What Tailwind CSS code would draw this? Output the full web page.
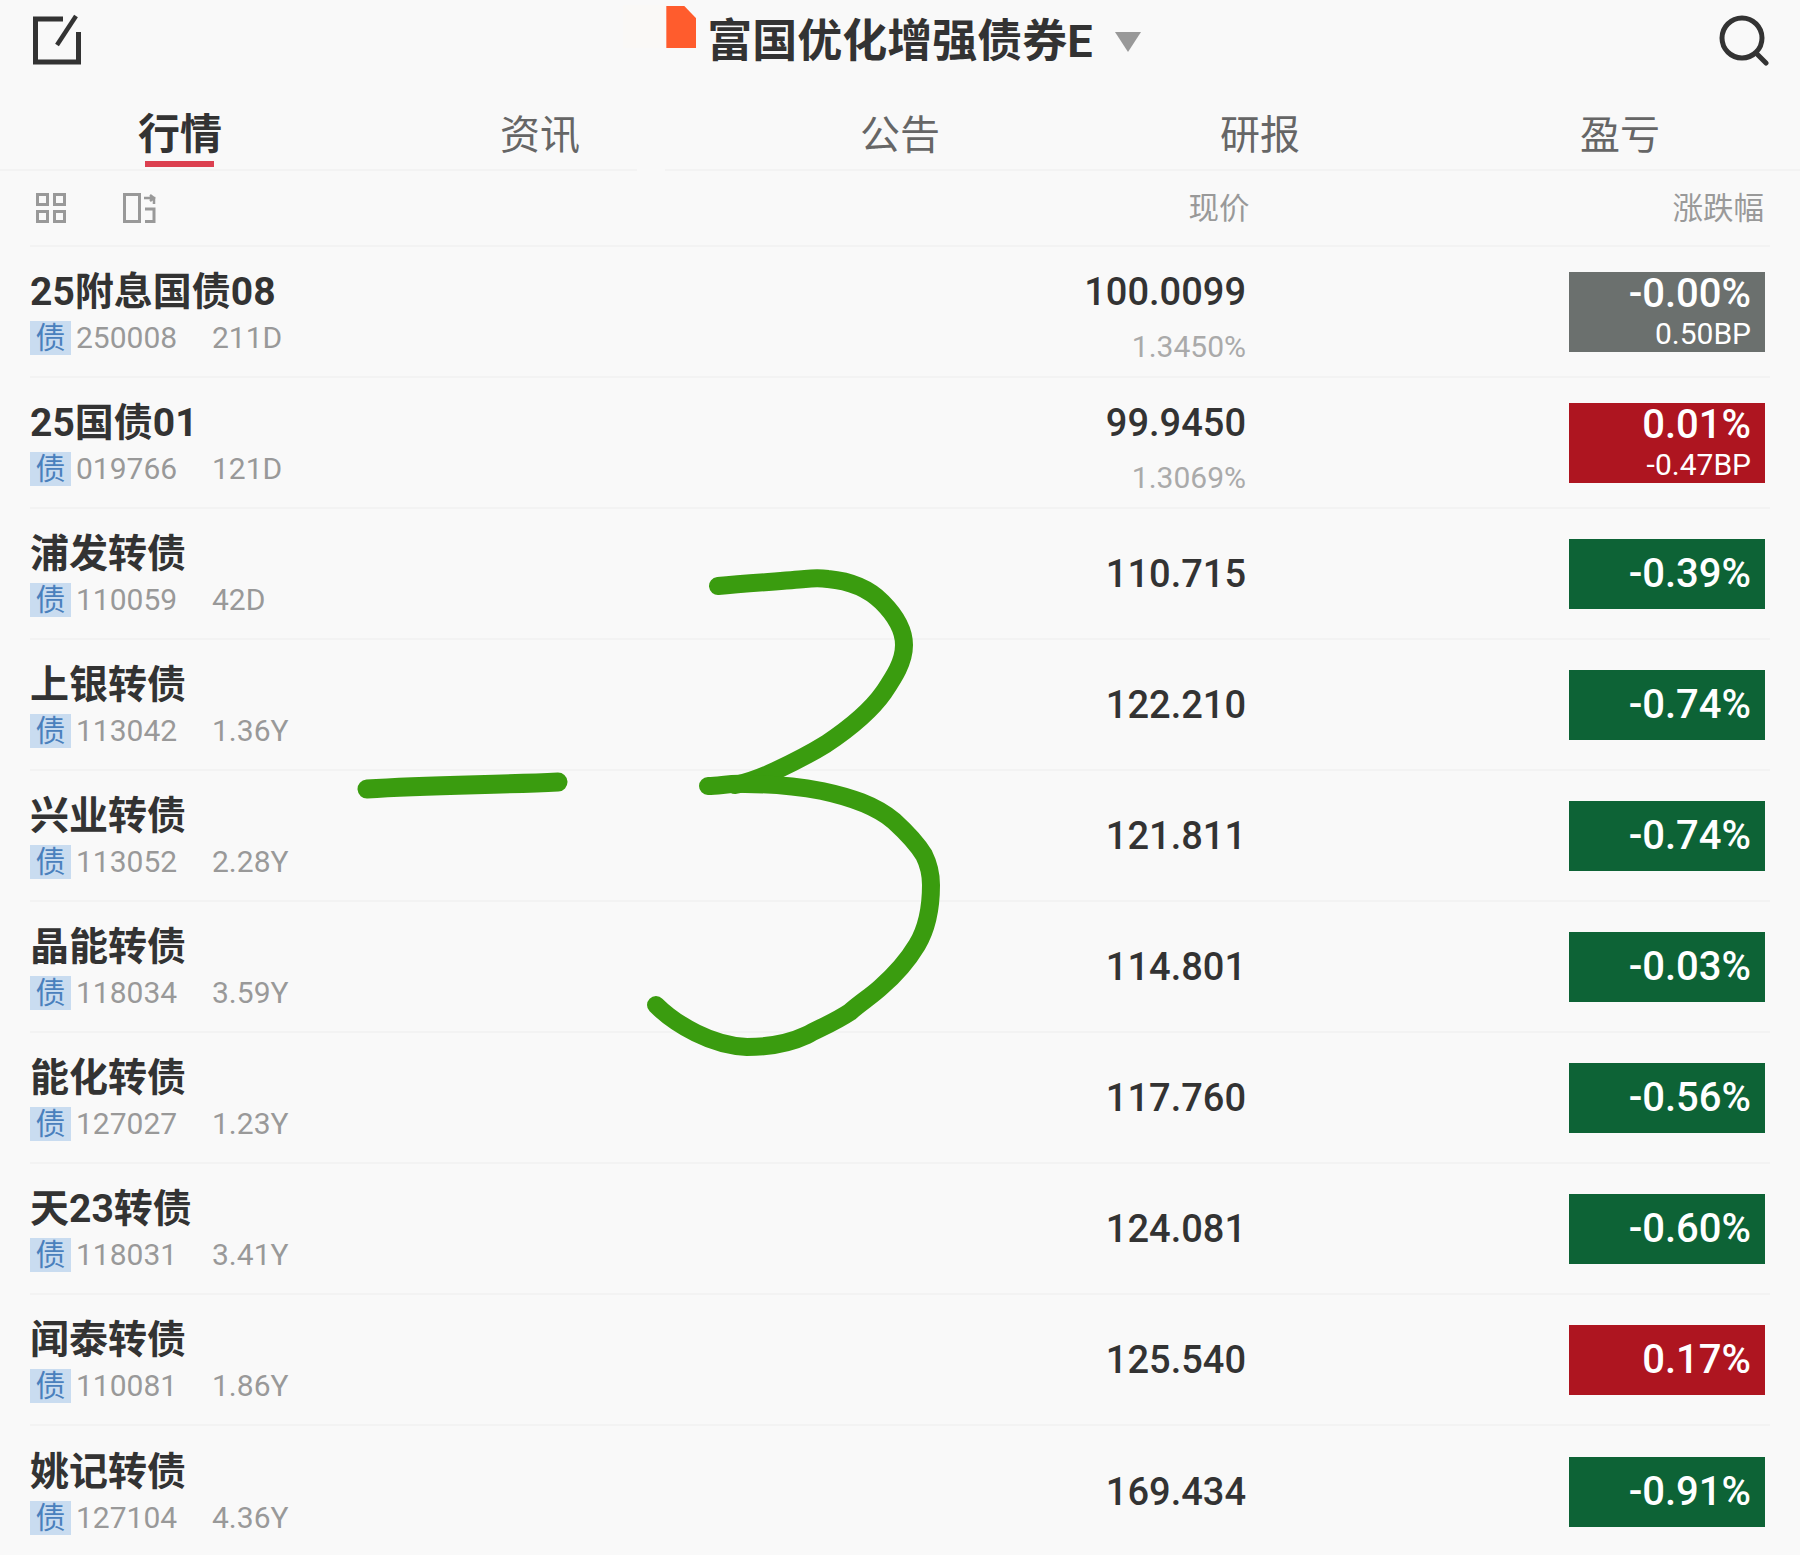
<!DOCTYPE html>
<html lang="zh">
<head>
<meta charset="utf-8">
<script src="https://cdn.jsdelivr.net/npm/@tailwindcss/browser@4"></script>
<title>富国优化增强债券E</title>
</head>
<body class="m-0 bg-[#f9f9f9]">
<div class="relative w-[1800px] h-[1555px] overflow-hidden bg-[#f9f9f9] text-[#333] font-['Roboto','Noto_Sans_CJK_SC',sans-serif]">
  <header class="flex h-[80px] items-center justify-between pl-[30px] pr-[30px]">
    <svg class="w-[52px] h-[52px]" viewBox="0 0 52 52" fill="none" stroke="#333" stroke-width="5"><path d="M33 5H5.500V48H48.500V18"/><path d="M46 2L27 31" stroke-width="4.500"/></svg>
    <div class="flex items-center h-full ml-[7px]">
      <div class="self-start mt-[6px] w-[30px] h-[42px] bg-[#ff5c2d] [clip-path:polygon(0_0,60%_0,100%_30%,100%_100%,0_100%)]"></div>
      <h1 class="ml-[11px] mt-[3px] text-[45px] leading-[80px] font-bold text-[#333]">富国优化增强债券E</h1>
      <svg class="ml-[22px] w-[26px] h-[20px] mt-[4px]" viewBox="0 0 26 20"><path d="M0 0H26L13 20Z" fill="#999"/></svg>
    </div>
    <svg class="w-[52px] h-[52px]" viewBox="0 0 52 52" fill="none" stroke="#333" stroke-width="5" stroke-linecap="round"><circle cx="24" cy="24" r="20"/><path d="M39 40L48 49"/></svg>
  </header>
  <nav class="grid grid-cols-5 h-[91px] border-b-2 border-[#f3f3f3] text-[40px] text-[#666] text-center">
    <div class="relative pt-[27px] leading-[56px] text-[42px] font-bold text-[#333]">行情<span class="absolute left-[145px] top-[81px] w-[69px] h-[6px] bg-[#dc4050]"></span></div>
    <div class="pt-[28px] leading-[56px]">资讯</div>
    <div class="pt-[28px] leading-[56px]">公告</div>
    <div class="pt-[28px] leading-[56px]">研报</div>
    <div class="pt-[28px] leading-[56px]">盈亏</div>
  </nav>
  <main class="pl-[30px] pr-[30px]">
    <div class="flex items-center h-[76px] border-b-2 border-[#f3f3f3] text-[30.5px] text-[#999]">
      <svg class="ml-[6px] w-[30px] h-[30px]" viewBox="0 0 30 30" fill="none" stroke="#999" stroke-width="3"><rect x="1.5" y="1.5" width="10" height="10"/><rect x="18.5" y="1.5" width="10" height="10"/><rect x="1.5" y="18.5" width="10" height="10"/><rect x="18.5" y="18.5" width="10" height="10"/></svg>
      <svg class="ml-[57px] w-[33px] h-[30px]" viewBox="0 0 33 30" fill="none" stroke="#999" stroke-width="3"><rect x="1.5" y="1.5" width="15" height="27"/><path d="M21 5H31V11M27 2L31 5L27 8" stroke-width="2.5"/><path d="M22 16H31V28.500H22" stroke-width="3"/></svg>
      <span class="ml-auto w-[62px] text-right pt-[2px]">现价</span>
      <span class="ml-[423px] mr-[6px] pt-[2px]">涨跌幅</span>
    </div>

    <div class="flex items-center h-[131px] border-b-2 border-[#f3f3f3]">
      <div class="w-[600px]"><div class="text-[39px] leading-[50px] font-bold mt-[-2px]">25附息国债08</div><div class="flex items-center h-[34px] mt-[4px] text-[30px] text-[#999]"><span class="flex justify-center items-center w-[41px] h-[34px] mr-[5px] bg-[#c9dcf0] text-[#4a80bd]">债</span><span class="w-[136px]">250008</span><span>211D</span></div></div>
      <div class="w-[616px] mt-[8px] text-right"><div class="text-[38px] leading-[50px] font-medium">100.0099</div><div class="mt-[12px] text-[30px] leading-[36px] text-[#aaa]">1.3450%</div></div>
      <div class="ml-[323px] flex flex-col justify-center w-[196px] h-[80px] pr-[14px] text-right text-white bg-[#6b706e]"><div class="text-[40px] leading-[44px] font-medium mt-[-5px] mb-[2px]">-0.00%</div><div class="text-[30px] leading-[32px] mb-[-3px]">0.50BP</div></div>
    </div>
    <div class="flex items-center h-[131px] border-b-2 border-[#f3f3f3]">
      <div class="w-[600px]"><div class="text-[39px] leading-[50px] font-bold mt-[-2px]">25国债01</div><div class="flex items-center h-[34px] mt-[4px] text-[30px] text-[#999]"><span class="flex justify-center items-center w-[41px] h-[34px] mr-[5px] bg-[#c9dcf0] text-[#4a80bd]">债</span><span class="w-[136px]">019766</span><span>121D</span></div></div>
      <div class="w-[616px] mt-[8px] text-right"><div class="text-[38px] leading-[50px] font-medium">99.9450</div><div class="mt-[12px] text-[30px] leading-[36px] text-[#aaa]">1.3069%</div></div>
      <div class="ml-[323px] flex flex-col justify-center w-[196px] h-[80px] pr-[14px] text-right text-white bg-[#ae1520]"><div class="text-[40px] leading-[44px] font-medium mt-[-5px] mb-[2px]">0.01%</div><div class="text-[30px] leading-[32px] mb-[-3px]">-0.47BP</div></div>
    </div>
    <div class="flex items-center h-[131px] border-b-2 border-[#f3f3f3]">
      <div class="w-[600px]"><div class="text-[39px] leading-[50px] font-bold mt-[-2px]">浦发转债</div><div class="flex items-center h-[34px] mt-[4px] text-[30px] text-[#999]"><span class="flex justify-center items-center w-[41px] h-[34px] mr-[5px] bg-[#c9dcf0] text-[#4a80bd]">债</span><span class="w-[136px]">110059</span><span>42D</span></div></div>
      <div class="w-[616px] pt-[2px] text-right text-[38px] font-medium">110.715</div>
      <div class="ml-[323px] flex items-center justify-end w-[196px] h-[70px] pr-[14px] text-[40px] font-medium text-white bg-[#0d6336]">-0.39%</div>
    </div>
    <div class="flex items-center h-[131px] border-b-2 border-[#f3f3f3]">
      <div class="w-[600px]"><div class="text-[39px] leading-[50px] font-bold mt-[-2px]">上银转债</div><div class="flex items-center h-[34px] mt-[4px] text-[30px] text-[#999]"><span class="flex justify-center items-center w-[41px] h-[34px] mr-[5px] bg-[#c9dcf0] text-[#4a80bd]">债</span><span class="w-[136px]">113042</span><span>1.36Y</span></div></div>
      <div class="w-[616px] pt-[2px] text-right text-[38px] font-medium">122.210</div>
      <div class="ml-[323px] flex items-center justify-end w-[196px] h-[70px] pr-[14px] text-[40px] font-medium text-white bg-[#0d6336]">-0.74%</div>
    </div>
    <div class="flex items-center h-[131px] border-b-2 border-[#f3f3f3]">
      <div class="w-[600px]"><div class="text-[39px] leading-[50px] font-bold mt-[-2px]">兴业转债</div><div class="flex items-center h-[34px] mt-[4px] text-[30px] text-[#999]"><span class="flex justify-center items-center w-[41px] h-[34px] mr-[5px] bg-[#c9dcf0] text-[#4a80bd]">债</span><span class="w-[136px]">113052</span><span>2.28Y</span></div></div>
      <div class="w-[616px] pt-[2px] text-right text-[38px] font-medium">121.811</div>
      <div class="ml-[323px] flex items-center justify-end w-[196px] h-[70px] pr-[14px] text-[40px] font-medium text-white bg-[#0d6336]">-0.74%</div>
    </div>
    <div class="flex items-center h-[131px] border-b-2 border-[#f3f3f3]">
      <div class="w-[600px]"><div class="text-[39px] leading-[50px] font-bold mt-[-2px]">晶能转债</div><div class="flex items-center h-[34px] mt-[4px] text-[30px] text-[#999]"><span class="flex justify-center items-center w-[41px] h-[34px] mr-[5px] bg-[#c9dcf0] text-[#4a80bd]">债</span><span class="w-[136px]">118034</span><span>3.59Y</span></div></div>
      <div class="w-[616px] pt-[2px] text-right text-[38px] font-medium">114.801</div>
      <div class="ml-[323px] flex items-center justify-end w-[196px] h-[70px] pr-[14px] text-[40px] font-medium text-white bg-[#0d6336]">-0.03%</div>
    </div>
    <div class="flex items-center h-[131px] border-b-2 border-[#f3f3f3]">
      <div class="w-[600px]"><div class="text-[39px] leading-[50px] font-bold mt-[-2px]">能化转债</div><div class="flex items-center h-[34px] mt-[4px] text-[30px] text-[#999]"><span class="flex justify-center items-center w-[41px] h-[34px] mr-[5px] bg-[#c9dcf0] text-[#4a80bd]">债</span><span class="w-[136px]">127027</span><span>1.23Y</span></div></div>
      <div class="w-[616px] pt-[2px] text-right text-[38px] font-medium">117.760</div>
      <div class="ml-[323px] flex items-center justify-end w-[196px] h-[70px] pr-[14px] text-[40px] font-medium text-white bg-[#0d6336]">-0.56%</div>
    </div>
    <div class="flex items-center h-[131px] border-b-2 border-[#f3f3f3]">
      <div class="w-[600px]"><div class="text-[39px] leading-[50px] font-bold mt-[-2px]">天23转债</div><div class="flex items-center h-[34px] mt-[4px] text-[30px] text-[#999]"><span class="flex justify-center items-center w-[41px] h-[34px] mr-[5px] bg-[#c9dcf0] text-[#4a80bd]">债</span><span class="w-[136px]">118031</span><span>3.41Y</span></div></div>
      <div class="w-[616px] pt-[2px] text-right text-[38px] font-medium">124.081</div>
      <div class="ml-[323px] flex items-center justify-end w-[196px] h-[70px] pr-[14px] text-[40px] font-medium text-white bg-[#0d6336]">-0.60%</div>
    </div>
    <div class="flex items-center h-[131px] border-b-2 border-[#f3f3f3]">
      <div class="w-[600px]"><div class="text-[39px] leading-[50px] font-bold mt-[-2px]">闻泰转债</div><div class="flex items-center h-[34px] mt-[4px] text-[30px] text-[#999]"><span class="flex justify-center items-center w-[41px] h-[34px] mr-[5px] bg-[#c9dcf0] text-[#4a80bd]">债</span><span class="w-[136px]">110081</span><span>1.86Y</span></div></div>
      <div class="w-[616px] pt-[2px] text-right text-[38px] font-medium">125.540</div>
      <div class="ml-[323px] flex items-center justify-end w-[196px] h-[70px] pr-[14px] text-[40px] font-medium text-white bg-[#ae1520]">0.17%</div>
    </div>
    <div class="flex items-center h-[131px]">
      <div class="w-[600px]"><div class="text-[39px] leading-[50px] font-bold mt-[-2px]">姚记转债</div><div class="flex items-center h-[34px] mt-[4px] text-[30px] text-[#999]"><span class="flex justify-center items-center w-[41px] h-[34px] mr-[5px] bg-[#c9dcf0] text-[#4a80bd]">债</span><span class="w-[136px]">127104</span><span>4.36Y</span></div></div>
      <div class="w-[616px] pt-[2px] text-right text-[38px] font-medium">169.434</div>
      <div class="ml-[323px] flex items-center justify-end w-[196px] h-[70px] pr-[14px] text-[40px] font-medium text-white bg-[#0d6336]">-0.91%</div>
    </div>
  </main>
  <div class="absolute left-[637px] top-[168px] w-[28px] h-[4px] bg-[#f9f9f9]"></div>
  <div class="absolute left-[623px] top-[5px] w-[43px] h-[43px] bg-[#faf9f7]"></div>
  <svg class="absolute left-0 top-0 w-[1800px] h-[1555px] pointer-events-none" viewBox="0 0 1800 1555" fill="none" stroke="#3a9c0f" stroke-width="19" stroke-linecap="round" stroke-linejoin="round">
    <path d="M367 789C430 785 495 785 558 782"/>
    <path d="M718 586C750 583 785 581 805 579C815 578 820 578 828 579C850 581 868 588 882 602C895 615 904 630 904 645C904 662 894 677 884 692C870 712 850 728 826 744C805 757 790 764 775 771C762 777 750 782 735 785" stroke-width="18"/>
    <path d="M708 786C720 786 730 783 745 784C775 784 800 787 822 791C850 797 875 805 894 821C906 832 918 845 924 855C929 865 931 875 931 885C931 910 926 930 917 945C908 960 895 975 880 988C870 997 860 1003 850 1012C835 1022 820 1028 807 1035C790 1043 770 1047 747 1047C725 1046 710 1040 696 1033C680 1025 668 1017 656 1005" stroke-width="18"/>
  </svg>
</div>
</body>
</html>
